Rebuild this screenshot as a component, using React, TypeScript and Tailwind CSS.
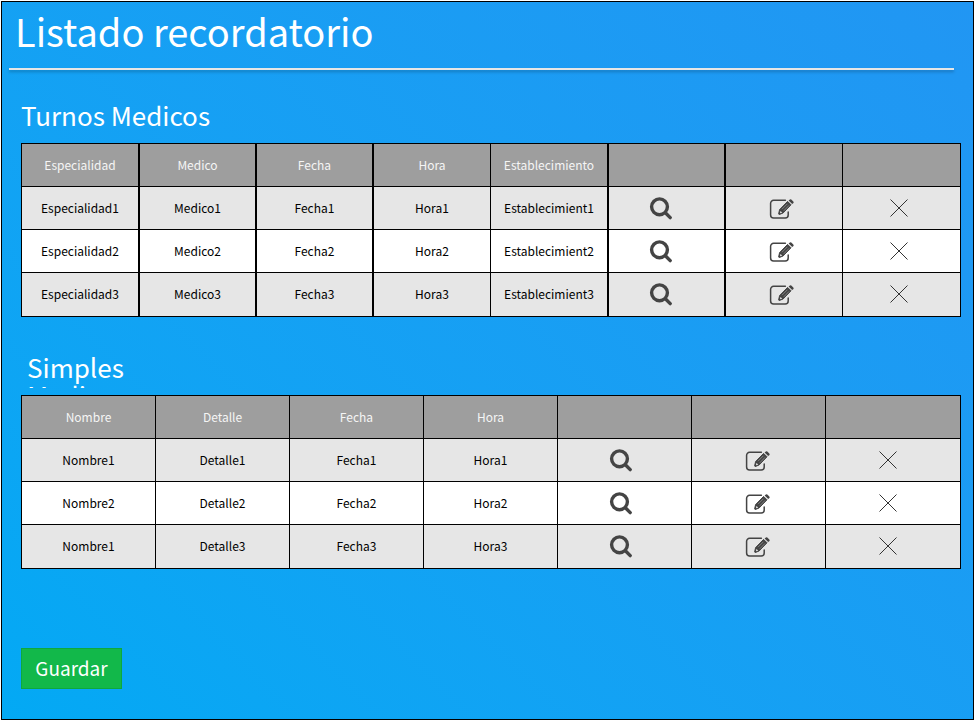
import React from "react";

type Action = "search" | "edit" | "remove";

function SearchIcon() {
  return (
    <svg width="24" height="24" viewBox="0 0 24 24" fill="none" stroke="#444" aria-hidden="true">
      <circle cx="10.5" cy="10.8" r="7.9" strokeWidth="3.4" />
      <path d="M16.6 17 21.2 21.6" strokeWidth="3.4" strokeLinecap="round" />
    </svg>
  );
}

function EditIcon() {
  return (
    <svg width="26" height="24" viewBox="0 -2 26 24" fill="none" aria-hidden="true">
      <path
        d="M16.4 2.3H4.6A3 3 0 0 0 1.6 5.3v11.6A3 3 0 0 0 4.6 19.9h11.6a3 3 0 0 0 3-3V14"
        stroke="#444"
        strokeWidth="1.5"
        strokeLinecap="round"
      />
      <path
        d="M18.6 3.4 22 6.8 14.2 14.9 10.2 16.6 9.6 16 10.6 11.6Z"
        fill="#444"
        stroke="#444"
        strokeWidth="1"
        strokeLinejoin="round"
      />
      <path d="M19.6 2.5 20.9 1.4Q21.6 .9 22.3 1.6L24.3 3.6Q25 4.3 24.5 5L23.2 6.1Z" fill="#444" />
      <path d="M13 11.2 18.4 5.8M14.8 12.8 20 7.4" stroke="#c4c4c4" strokeWidth=".5" />
      <path d="M11.4 12.9 13.2 14.5 11.6 15.2 11 14.7Z" fill="#e6e6e6" />
    </svg>
  );
}

function RemoveIcon() {
  return (
    <svg width="18" height="18" viewBox="0 0 18 18" fill="none" stroke="#333" strokeWidth="1" aria-hidden="true">
      <path d="M.5.5l17 17M17.5.5l-17 17" />
    </svg>
  );
}

const icons: Record<Action, React.ReactElement> = {
  search: <SearchIcon />,
  edit: <EditIcon />,
  remove: <RemoveIcon />,
};

const labels: Record<Action, string> = { search: "Ver", edit: "Editar", remove: "Eliminar" };

const actions: Action[] = ["search", "edit", "remove"];

interface DataTableProps {
  label: string;
  headers: string[];
  rows: string[][];
  columns: string[];
  insets: string[];
}

function DataTable({ label, headers, rows, columns, insets }: DataTableProps) {
  return (
    <table
      aria-label={label}
      className="w-full table-fixed border-separate border-spacing-0 border-l border-t border-black text-center text-xs"
    >
      <thead>
        <tr className="h-[43px] bg-[#9e9e9e] text-[#f5f5f5]">
          {[...headers, "", "", ""].map((header, i) => (
            <th key={i} className={`border-b border-black p-0 font-normal ${columns[i]}`}>
              {header}
            </th>
          ))}
        </tr>
      </thead>
      <tbody>
        {rows.map((row, r) => (
          <tr key={r} className="h-[43px] bg-white text-black odd:bg-[#e6e6e6] last:h-11">
            {row.map((value, i) => (
              <td key={i} className={`border-b border-black p-0 [tr:last-child>&]:pb-px ${columns[i]}`}>
                {value}
              </td>
            ))}
            {actions.map((action, i) => (
              <td
                key={action}
                className={`border-b border-black py-0 pl-0 [tr:last-child>&]:pb-px ${insets[i]} ${columns[row.length + i]}`}
              >
                <button type="button" aria-label={`${labels[action]} ${row[0]}`} className="inline-flex align-middle">
                  {icons[action]}
                </button>
              </td>
            ))}
          </tr>
        ))}
      </tbody>
    </table>
  );
}

const turnos = [1, 2, 3].map((n) => [
  `Especialidad${n}`,
  `Medico${n}`,
  `Fecha${n}`,
  `Hora${n}`,
  `Establecimient${n}`,
]);

const simples = [
  ["Nombre1", "Detalle1", "Fecha1", "Hora1"],
  ["Nombre2", "Detalle2", "Fecha2", "Hora2"],
  ["Nombre1", "Detalle3", "Fecha3", "Hora3"],
];

export default function App() {
  return (
    <div className="flex min-h-screen bg-white pl-px pr-0.5 pt-px font-['Noto_Sans_CJK_SC','Noto_Sans',sans-serif]">
      <main className="w-full border border-black bg-linear-45 from-[#03a9f4] to-[#2196f3]">
        <header className="ml-[7px] mr-[19px]">
          <h1 className="h-[66px] pl-1.5 text-[38px] leading-[57px] text-white">Listado recordatorio</h1>
          <div className="h-0.5 bg-[#e6e6e6] shadow-[0_2px_3px_rgba(0,0,0,0.25)]" />
        </header>

        <div className="ml-[19px] mr-3">
          <section className="pt-[31px]">
            <h2 className="h-[42px] text-[26px] leading-7 text-white">Turnos Medicos</h2>
            <DataTable
              label="Turnos Medicos"
              headers={["Especialidad", "Medico", "Fecha", "Hora", "Establecimiento"]}
              rows={turnos}
              columns={[
                "w-[118px] border-r-2",
                "w-[117px] border-r-2",
                "w-[117px] border-r-2",
                "w-[117px] border-r",
                "w-[118px] border-r-2",
                "w-[117px] border-r-2",
                "w-[117px] border-r",
                "w-[118px] border-r",
              ]}
              insets={["pr-3", "pr-1", "pr-1.5"]}
            />
          </section>

          <section className="pt-9">
            <h2 className="mb-[7px] ml-1.5 h-[35px] w-28 overflow-hidden text-[26px] leading-7 text-white">
              Simples Medicos
            </h2>
            <DataTable
              label="Simples Medicos"
              headers={["Nombre", "Detalle", "Fecha", "Hora"]}
              rows={simples}
              columns={[
                "w-[134px] border-r",
                "w-[134px] border-r",
                "w-[134px] border-r",
                "w-[134px] border-r",
                "w-[134px] border-r",
                "w-[134px] border-r",
                "w-[135px] border-r",
              ]}
              insets={["pr-2", "pr-0.5", "pr-2.5"]}
            />
          </section>

          <button
            type="button"
            className="mt-[79px] h-[41px] w-[101px] border border-[#0fa83c] bg-[#12b84a] text-[19px] text-white"
          >
            Guardar
          </button>
        </div>
      </main>
    </div>
  );
}
